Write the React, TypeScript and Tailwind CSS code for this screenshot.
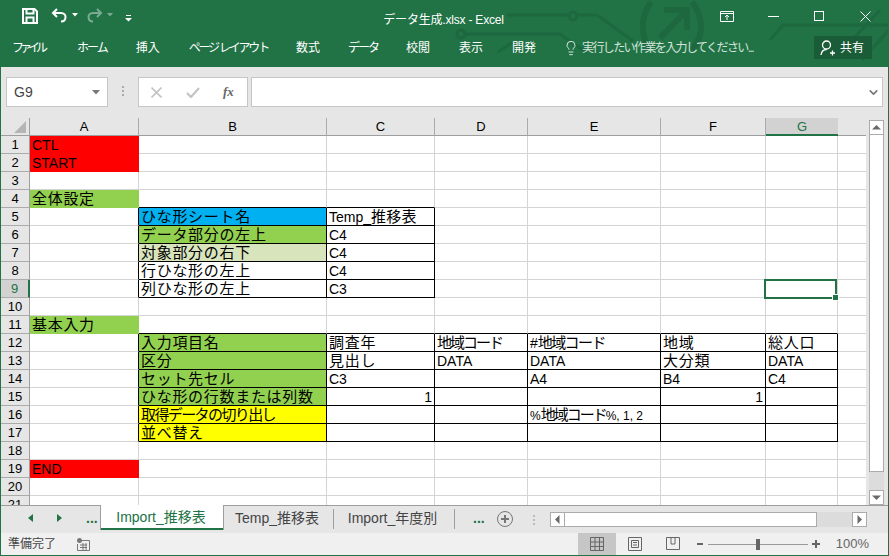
import React from 'react';
import { ChevronDown, Lightbulb } from 'lucide-react';

const JP = /([\u3000-\u9fff\uff00-\uffef]+)/;

// セル内の文字: 和文だけ少し大きくする
const CellText: React.FC<{ text: string; tight?: string; latin?: string }> = ({ text, tight, latin }) => (
  <>
    {text.split(JP).map((part, i) =>
      JP.test(part) ? (
        <span key={i} className={`text-[15px] ${tight ?? 'tracking-[0.7px]'}`}>{part}</span>
      ) : (
        <span key={i} className={latin}>{part}</span>
      )
    )}
  </>
);

type Cell = { t?: string; bg?: string; box?: boolean; right?: boolean; tight?: string; latin?: string };

const COLS = ['A', 'B', 'C', 'D', 'E', 'F', 'G', ''];

const red = 'bg-[#ff0000]';
const green = 'bg-[#92d050]';
const blue = 'bg-[#00b0f0]';
const pale = 'bg-[#d8e4bc]';
const yellow = 'bg-[#ffff00]';

const rows: Record<number, Record<number, Cell>> = {
  1: { 0: { t: 'CTL', bg: red } },
  2: { 0: { t: 'START', bg: red } },
  4: { 0: { t: '全体設定', bg: green } },
  5: { 1: { t: 'ひな形シート名', bg: blue, box: true }, 2: { t: 'Temp_推移表', box: true, tight: 'tracking-[0.2px]' } },
  6: { 1: { t: 'データ部分の左上', bg: green, box: true }, 2: { t: 'C4', box: true } },
  7: { 1: { t: '対象部分の右下', bg: pale, box: true }, 2: { t: 'C4', box: true } },
  8: { 1: { t: '行ひな形の左上', box: true }, 2: { t: 'C4', box: true } },
  9: { 1: { t: '列ひな形の左上', box: true }, 2: { t: 'C3', box: true } },
  11: { 0: { t: '基本入力', bg: green } },
  12: {
    1: { t: '入力項目名', bg: green, box: true },
    2: { t: '調査年', box: true },
    3: { t: '地域コード', box: true, tight: 'tracking-[-2px]' },
    4: { t: '#地域コード', box: true, tight: 'tracking-[-1.6px]' },
    5: { t: '地域', box: true },
    6: { t: '総人口', box: true },
  },
  13: {
    1: { t: '区分', bg: green, box: true },
    2: { t: '見出し', box: true },
    3: { t: 'DATA', box: true },
    4: { t: 'DATA', box: true },
    5: { t: '大分類', box: true },
    6: { t: 'DATA', box: true },
  },
  14: {
    1: { t: 'セット先セル', bg: green, box: true },
    2: { t: 'C3', box: true },
    3: { box: true },
    4: { t: 'A4', box: true },
    5: { t: 'B4', box: true },
    6: { t: 'C4', box: true },
  },
  15: {
    1: { t: 'ひな形の行数または列数', bg: green, box: true },
    2: { t: '1', box: true, right: true },
    3: { box: true },
    4: { box: true },
    5: { t: '1', box: true, right: true },
    6: { box: true },
  },
  16: {
    1: { t: '取得データの切り出し', bg: yellow, box: true, tight: 'tracking-[-1.6px]' },
    2: { box: true },
    3: { box: true },
    4: { t: '%地域コード%, 1, 2', box: true, tight: 'tracking-[-2px]', latin: 'text-[12px]' },
    5: { box: true },
    6: { box: true },
  },
  17: {
    1: { t: '並べ替え', bg: yellow, box: true },
    2: { box: true },
    3: { box: true },
    4: { box: true },
    5: { box: true },
    6: { box: true },
  },
  19: { 0: { t: 'END', bg: red } },
};

const ROW_NUMS = Array.from({ length: 21 }, (_, i) => i + 1);

const Sheet: React.FC = () => (
  <div className="grid flex-1 min-w-0 grid-cols-[29px_109px_188px_108px_93px_133px_105px_72px_29px] grid-rows-[18px_repeat(21,18px)] overflow-hidden h-[387px] text-[14px] leading-[18px] text-black">
    <div className="relative bg-[#e6e6e6] border-r border-b border-[#9e9e9e]">
      <svg className="absolute right-[3px] bottom-[2px]" width="12" height="12" viewBox="0 0 12 12">
        <path d="M12 0V12H0Z" fill="#b5b5b5" />
      </svg>
    </div>
    {COLS.map((c, i) =>
      i === 6 ? (
        <div key={i} className="bg-[#d2d2d2] border-b-2 border-[#217346] text-center text-[#217346] text-[13px]">{c}</div>
      ) : i === 7 ? (
        <div key={i} className="border-b border-[#9e9e9e]" />
      ) : (
        <div key={i} className="bg-[#e6e6e6] border-r border-b border-r-[#ababab] border-b-[#9e9e9e] text-center text-[13px]">{c}</div>
      )
    )}
    {ROW_NUMS.map((r) => (
      <React.Fragment key={r}>
        {r === 9 ? (
          <div className="bg-[#d2d2d2] border-r-2 border-b border-r-[#217346] border-b-[#ababab] text-center text-[#217346] text-[13px]">{r}</div>
        ) : (
          <div className="bg-[#e6e6e6] border-r border-b border-r-[#9e9e9e] border-b-[#ababab] text-center text-[13px]">{r}</div>
        )}
        {COLS.map((_, i) => {
          const cell = rows[r]?.[i];
          const nextBox = rows[r]?.[i + 1]?.box;
          const belowBox = rows[r + 1]?.[i]?.box;
          const blackR = cell?.box || nextBox;
          const blackB = cell?.box || belowBox;
          return (
            <div
              key={i}
              className={[
                'relative border-r border-b whitespace-nowrap px-[2px]',
                i === 7 ? 'border-r-[#9e9e9e]' : blackR ? 'border-r-black' : cell?.bg ? 'border-r-transparent' : 'border-r-[#d4d4d4]',
                blackB ? 'border-b-black' : cell?.bg ? 'border-b-transparent' : 'border-b-[#d4d4d4]',
                cell?.bg ?? 'bg-white',
                cell?.right ? 'text-right' : '',
              ].join(' ')}
            >
              {cell?.t && <CellText text={cell.t} tight={cell.tight} latin={cell.latin} />}
              {r === 9 && i === 6 && (
                <div className="absolute z-10 -left-[2px] -top-px h-[20px] w-[73px] border-2 border-[#217346]">
                  <div className="absolute -right-[4px] -bottom-[4px] h-[7px] w-[7px] bg-[#217346] border border-white" />
                </div>
              )}
            </div>
          );
        })}
      </React.Fragment>
    ))}
  </div>
);

const ScrollBtn: React.FC<{ d: string }> = ({ d }) => (
  <div className="flex h-[15px] w-[15px] shrink-0 items-center justify-center border border-[#ababab] bg-white">
    <svg width="9" height="9" viewBox="0 0 9 9">
      <path d={d} fill="#6a6a6a" />
    </svg>
  </div>
);

const TABS: { t: string; cls: string }[] = [
  { t: 'ファイル', cls: 'tracking-[-4px] mr-[33px]' },
  { t: 'ホーム', cls: 'tracking-[-2px] mr-[29px]' },
  { t: '挿入', cls: 'mr-[29px]' },
  { t: 'ページ レイアウト', cls: 'tracking-[-2.2px] mr-[28px]' },
  { t: '数式', cls: 'mr-[28px]' },
  { t: 'データ', cls: 'tracking-[-2px] mr-[28px]' },
  { t: '校閲', cls: 'mr-[29px]' },
  { t: '表示', cls: 'mr-[29px]' },
  { t: '開発', cls: '' },
];

const App: React.FC = () => (
  <div className="relative flex h-[556px] w-[889px] flex-col overflow-hidden border border-t-0 border-[#217346] bg-[#e6e6e6] font-['Liberation_Sans','Noto_Sans_CJK_JP',sans-serif]">
    {/* タイトルバーとリボンのタブ */}
    <div className="relative -mx-px h-[67px] shrink-0 bg-[#217346] text-white">
      <svg className="absolute left-0 top-0" width="889" height="67" viewBox="0 0 889 67" fill="none" stroke="#1d683f" strokeWidth="3">
        <path d="M507 15H569M578 15H597L633 41" />
        <circle cx="573" cy="16" r="4" />
        <path d="M466 34H560L587 53M498 52L513 42" />
        <circle cx="461" cy="34" r="4" />
        <path d="M651 2C640 18 640 35 651 50M692 2C704 18 704 35 692 50" strokeWidth="6" />
        <path d="M660 38L687 10M664 10H687V30" strokeWidth="6" />
        <path d="M770 40L783 25H889M843 50L880 10M862 60L889 30" />
      </svg>

      <div className="relative flex h-[36px] items-center">
        <svg className="absolute left-[22px] top-[8px]" width="16" height="16" viewBox="0 0 16 16" fill="none" stroke="white" strokeWidth="2">
          <path d="M1 1H12.5L15 3.5V15H1Z" />
          <path d="M4.5 1V5.5H11.5V1M4.5 15V9.5H11.5V15" />
        </svg>
        <svg className="absolute left-[51px] top-[8px]" width="16" height="15" viewBox="0 0 16 15" fill="none" stroke="white" strokeWidth="2">
          <path d="M6 1L2 5L6 9M2 5H10C13 5 14.5 7 14.5 9C14.5 11.5 13 13.5 10 13.5" />
        </svg>
        <svg className="absolute left-[72px] top-[13px]" width="6" height="4" viewBox="0 0 6 4"><path d="M0 0H6L3 3.5Z" fill="white" /></svg>
        <svg className="absolute left-[87px] top-[8px] opacity-40" width="16" height="15" viewBox="0 0 16 15" fill="none" stroke="white" strokeWidth="2">
          <path d="M10 1L14 5L10 9M14 5H6C3 5 1.5 7 1.5 9C1.5 11.5 3 13.5 6 13.5" />
        </svg>
        <svg className="absolute left-[107px] top-[13px] opacity-40" width="6" height="4" viewBox="0 0 6 4"><path d="M0 0H6L3 3.5Z" fill="white" /></svg>
        <svg className="absolute left-[125px] top-[15px]" width="7" height="7" viewBox="0 0 7 7"><path d="M1 0H6V1H1ZM0 3H7L3.5 6.5Z" fill="white" /></svg>
        <div className="w-full pr-[2px] pt-[3px] text-center text-[12px] tracking-[-0.2px]">データ生成.xlsx - Excel</div>
        <svg className="absolute left-[720px] top-[11px]" width="14" height="11" viewBox="0 0 14 11" fill="none" stroke="white">
          <path d="M.5.5H13.5V10.5H.5ZM.5 2.5H13.5M7 9V4.5M5 6L7 4L9 6" />
        </svg>
        <div className="absolute left-[768px] top-[16px] h-px w-[11px] bg-white" />
        <div className="absolute left-[814px] top-[11px] h-[10px] w-[10px] border border-white" />
        <svg className="absolute left-[860px] top-[11px]" width="11" height="11" viewBox="0 0 11 11" stroke="white">
          <path d="M.5.5L10.5 10.5M10.5.5L.5 10.5" />
        </svg>
      </div>

      <div className="relative flex h-[31px] items-start pl-[12px] pt-px text-[12px] leading-[22px]">
        {TABS.map((tab) => (
          <span key={tab.t} className={`whitespace-nowrap ${tab.cls}`}>{tab.t}</span>
        ))}
        <Lightbulb className="absolute left-[563px] top-[4px] h-[16px] w-[16px]" strokeWidth={1.25} />
        <span className="absolute left-[582px] top-px whitespace-nowrap tracking-[-1.6px] text-[#d3e3da]">実行したい作業を入力してください...</span>
        <div className="absolute left-[814px] top-0 flex h-[23px] w-[58px] items-center justify-end bg-[#1a5c38] pr-[8px]">
          <svg className="absolute left-[6px] top-[4px]" width="15" height="16" viewBox="0 0 15 16" fill="none" stroke="white" strokeWidth="1.3">
            <circle cx="6.5" cy="5" r="4" />
            <path d="M1 15C1.5 11.5 3 9.5 6.5 9.5M10 13H15M12.5 10.5V15.5" />
          </svg>
          共有
        </div>
      </div>
    </div>

    {/* 数式バー */}
    <div className="flex h-[51px] shrink-0 items-start px-[5px] pt-[10px]">
      <div className="flex h-[30px] w-[102px] items-center justify-between border border-[#c6c6c6] bg-white pl-[7px] pr-[7px] text-[14px] text-[#444]">
        G9
        <svg width="8" height="5" viewBox="0 0 8 5"><path d="M0 0H8L4 4.5Z" fill="#777" /></svg>
      </div>
      <div className="flex w-[30px] flex-col items-center gap-[2px] pt-[9px]">
        <span className="h-[2px] w-[2px] bg-[#aaa]" />
        <span className="h-[2px] w-[2px] bg-[#aaa]" />
        <span className="h-[2px] w-[2px] bg-[#aaa]" />
      </div>
      <div className="flex h-[30px] w-[110px] items-center border border-[#c6c6c6] bg-white">
        <svg className="ml-[12px]" width="11" height="11" viewBox="0 0 11 11" stroke="#c4c4c4" strokeWidth="1.6"><path d="M.5.5L10.5 10.5M10.5.5L.5 10.5" /></svg>
        <svg className="ml-[24px]" width="14" height="11" viewBox="0 0 14 11" fill="none" stroke="#c4c4c4" strokeWidth="2.2"><path d="M1 6L5 10L13 1" /></svg>
        <span className="ml-[23px] font-['Liberation_Serif',serif] text-[13px] font-bold italic text-[#666]">fx</span>
      </div>
      <div className="ml-[3px] flex h-[30px] w-[632px] items-center justify-end border border-[#c6c6c6] bg-white pr-[2px]">
        <ChevronDown className="h-[13px] w-[13px] text-[#777]" strokeWidth={3} />
      </div>
    </div>

    {/* シート本体と縦スクロールバー */}
    <div className="flex h-[387px] shrink-0">
      <Sheet />
      <div className="flex w-[22px] shrink-0 flex-col pl-[3px] pt-[2px]">
        <ScrollBtn d="M0 6.5L4.5 2L9 6.5Z" />
        <div className="h-[337px] w-[15px] shrink-0 border-x border-b border-[#ababab] bg-white" />
        <div className="w-[15px] flex-1 bg-[#dcdcdc]" />
        <ScrollBtn d="M0 2.5H9L4.5 7Z" />
      </div>
    </div>

    {/* シート見出し */}
    <div className="flex h-[28px] shrink-0 items-start border-t border-[#9e9e9e] text-[14px]">
      <div className="flex h-[24px] w-[100px] items-center border-r border-[#9e9e9e] text-[#217346]">
        <svg className="ml-[27px]" width="6" height="8" viewBox="0 0 6 8"><path d="M5 0V8L0 4Z" fill="#217346" /></svg>
        <svg className="ml-[22px]" width="6" height="8" viewBox="0 0 6 8"><path d="M1 0V8L6 4Z" fill="#217346" /></svg>
        <span className="ml-[24px] font-bold leading-[10px]">...</span>
      </div>
      <div className="-mt-px flex h-[25px] w-[122px] items-center justify-center border-b-2 border-[#217346] bg-white pr-[2px] pt-px text-[#217346]">Import_推移表</div>
      <div className="flex h-[24px] w-[110px] items-center justify-center border-l border-[#9e9e9e] pr-[3px] text-[#444]">Temp_推移表</div>
      <div className="my-[3px] h-[20px] w-px bg-[#9e9e9e]" />
      <div className="flex h-[24px] w-[120px] items-center justify-center pr-[3px] text-[#444]">Import_年度別</div>
      <div className="my-[3px] h-[20px] w-px bg-[#9e9e9e]" />
      <span className="ml-[18px] mt-[3px] font-bold leading-[18px] text-[#217346]">...</span>
      <svg className="ml-[12px] mt-[5px]" width="16" height="16" viewBox="0 0 16 16" fill="none" stroke="#777">
        <circle cx="8" cy="8" r="7.5" />
        <path d="M8 4V12M4 8H12" strokeWidth="2" />
      </svg>
      <div className="ml-[20px] mt-[9px] flex flex-col gap-[2px]">
        <span className="h-[2px] w-[2px] bg-[#bbb]" />
        <span className="h-[2px] w-[2px] bg-[#bbb]" />
        <span className="h-[2px] w-[2px] bg-[#bbb]" />
      </div>
      <div className="ml-[15px] mt-[6px] flex h-[15px] w-[317px] bg-[#dcdcdc]">
        <ScrollBtn d="M6.5 0V9L2 4.5Z" />
        <div className="w-[252px] border-y border-r border-[#ababab] bg-white" />
        <div className="flex-1" />
        <ScrollBtn d="M2.5 0V9L7 4.5Z" />
      </div>
    </div>

    {/* ステータスバー */}
    <div className="relative flex h-[22px] shrink-0 items-center bg-[#f0f0f0] pl-[7px] text-[12px] text-[#444]">
      準備完了
      <svg className="ml-[21px]" width="13" height="13" viewBox="0 0 13 13" fill="none" stroke="#777">
        <circle cx="2.5" cy="2.5" r="2.5" fill="#777" stroke="none" />
        <path d="M5 2.5H12.5V12.5H.5V6M3 7H10M3 9.5H10M6 5V12M9 5V12" />
      </svg>
      <div className="ml-auto flex h-full items-center">
        <div className="flex h-full w-[38px] items-center justify-center bg-[#c6c6c6]">
          <svg width="14" height="14" viewBox="0 0 14 14" fill="none" stroke="#666"><path d="M.5.5H13.5V13.5H.5ZM.5 5H13.5M.5 9.5H13.5M5 .5V13.5M9.5 .5V13.5" /></svg>
        </div>
        <svg className="ml-[12px]" width="14" height="14" viewBox="0 0 14 14" fill="none" stroke="#666"><path d="M.5.5H13.5V13.5H.5ZM3.5 3.5H10.5V10.5H3.5ZM5 5.5H9M5 8H9" /></svg>
        <svg className="ml-[24px]" width="14" height="14" viewBox="0 0 14 14" fill="none" stroke="#666"><path d="M.5.5H13.5V12.5H.5ZM5 .5V7H9V.5" /></svg>
        <span className="ml-[17px] h-[2px] w-[6px] bg-[#666]" />
        <div className="relative ml-[5px] h-px w-[100px] bg-[#999]">
          <span className="absolute left-[48px] -top-[5px] h-[11px] w-[4px] bg-[#666]" />
        </div>
        <svg className="ml-[4px]" width="8" height="8" viewBox="0 0 8 8" stroke="#666" strokeWidth="2"><path d="M0 4H8M4 0V8" /></svg>
        <span className="ml-[16px] mr-[19px] text-[13px] text-[#666]">100%</span>
      </div>
    </div>
  </div>
);

export default App;
